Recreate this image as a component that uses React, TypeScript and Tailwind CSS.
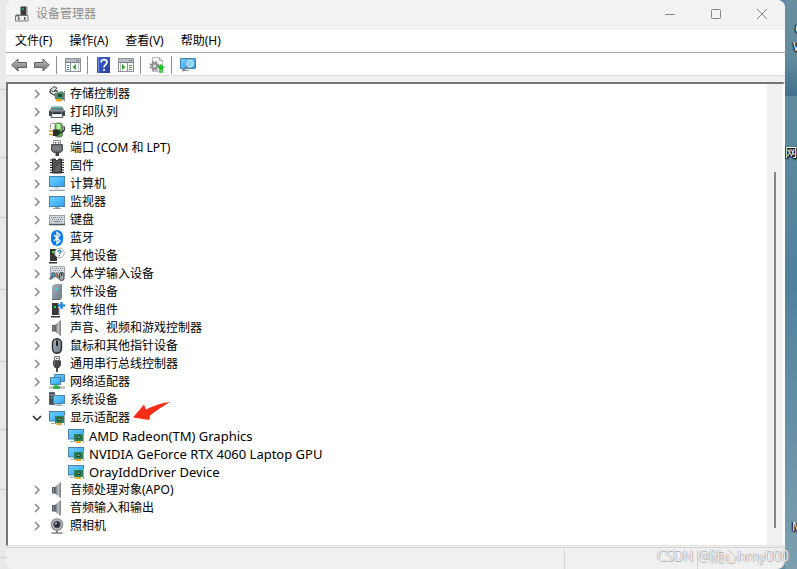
import type { ReactNode } from "react";

interface DeviceNode {
  label: string;
  icon: ReactNode;
  children?: DeviceNode[];
  marked?: boolean;
}

function Icon({ children, className = "" }: { children: ReactNode; className?: string }) {
  return (
    <svg viewBox="0 0 16 16" className={`size-4 shrink-0 ${className}`} aria-hidden="true">
      {children}
    </svg>
  );
}

function Gradients() {
  return (
    <svg className="absolute size-0" aria-hidden="true">
      <defs>
        <linearGradient id="screen" x1="0" y1="0" x2="1" y2="1">
          <stop offset="0" stopColor="#6fcdfd" />
          <stop offset="0.5" stopColor="#4fbcfb" />
          <stop offset="1" stopColor="#2a9df0" />
        </linearGradient>
        <linearGradient id="metal" x1="0" y1="0" x2="1" y2="0">
          <stop offset="0" stopColor="#5b6064" />
          <stop offset="0.6" stopColor="#c3c6c8" />
          <stop offset="1" stopColor="#777c80" />
        </linearGradient>
        <linearGradient id="steel" x1="0" y1="0" x2="1" y2="1">
          <stop offset="0" stopColor="#a9b4bc" />
          <stop offset="1" stopColor="#6c7982" />
        </linearGradient>
        <linearGradient id="arrow" x1="0" y1="0" x2="0" y2="1">
          <stop offset="0" stopColor="#c4c4c4" />
          <stop offset="1" stopColor="#6f6f6f" />
        </linearGradient>
        <linearGradient id="help" x1="0" y1="0" x2="1" y2="1">
          <stop offset="0" stopColor="#3c62d2" />
          <stop offset="1" stopColor="#2a3f9e" />
        </linearGradient>
      </defs>
    </svg>
  );
}

const storage = (
  <Icon>
    <path d="M1 4 5 .5l3 1.5L4.5 6z" fill="#ddd" stroke="#444" />
    <path d="M1 4.5v2L5 9l3-2M5 5h4" fill="none" stroke="#444" strokeWidth="1.3" />
    <path d="M5.5 8 13 5.5 14.5 7v6.500H7z" fill="#4b9272" stroke="#5b7a6c" />
    <rect x="9" y="8" width="4" height="3" fill="#1f4b38" />
    <path d="M7 13h6v2.5H7z" fill="#f2a51b" />
    <path d="M15.500 5v10" stroke="#888" />
  </Icon>
);

const printer = (
  <Icon>
    <path d="M3 2.500h10l2.500 4H.5z" fill="#71808b" />
    <path d="M4 3h8l1 1H3z" fill="#35c6a0" />
    <path d="M0 6.500h16V12H0z" fill="#39424a" />
    <path d="M1 6.500h14v1H1z" fill="#98a4ad" />
    <path d="M3.500 8.500h9l1.500 5H2z" fill="#f4f6f7" stroke="#5b646b" />
    <path d="M4 8.500h8V10H4z" fill="#20262b" />
  </Icon>
);

const battery = (
  <Icon>
    <path d="M2 7C0 2 3 1 6 1.500" fill="none" stroke="#888" />
    <rect x="6" y="1" width="7.500" height="14" rx="2.500" fill="#46b339" stroke="#777" />
    <path d="M7.500 2h4v5h-4z" fill="#b9efa3" />
    <path d="M4 7.500h4l3 1.500v3l-3 2H4z" fill="#2c2c2c" />
    <path d="M0 9h4M0 12.500h4" stroke="#d59b18" strokeWidth="1.400" />
    <path d="M11 10.500c5 0 5-5 3.500-6" fill="none" stroke="#333" strokeWidth="1.500" />
  </Icon>
);

const port = (
  <Icon>
    <path d="M4.500.500h7v4h-7z" fill="#eee" stroke="#999" />
    <path d="M6 2h1.200v1.500H6zM9 2h1.200v1.500H9z" fill="#555" />
    <path d="M2.500 4.500h11v6l-2 2h-7l-2-2z" fill="#66696c" stroke="#505356" />
    <path d="M4 7h8M4 9h8" stroke="#919598" />
    <path d="M6.500 12h3.500v4H6.500z" fill="#3e4042" />
  </Icon>
);

const chip = (
  <Icon>
    <path
      d="M1 2h3M1 4.500h3M1 7h3M1 9.500h3M1 12h3M1 14.500h3M12 2h3M12 4.500h3M12 7h3M12 9.500h3M12 12h3M12 14.500h3"
      stroke="#222"
      strokeWidth="1.200"
    />
    <path d="M3.500 1h2.500L7.500 2.500h1L10 1h2.500v14h-9z" fill="#505050" stroke="#282828" />
    <path d="M5 13 11 5v8z" fill="#666" />
  </Icon>
);

const computer = (
  <Icon>
    <rect x="0.500" y="0.500" width="15" height="10" fill="url(#screen)" stroke="#4a83a8" />
    <path d="M6 11h4v1.500H6z" fill="#b9c9d3" />
    <path d="M2 12.500h12l1.500 1.500H.500z" fill="#dbe5eb" />
    <path d="M0 14.500h16" stroke="#8fa3b1" />
  </Icon>
);

const monitor = (
  <Icon>
    <rect x="0.500" y="2.500" width="15" height="10" fill="url(#screen)" stroke="#4a83a8" />
    <path d="M6 13h4v1H6z" fill="#9ab0bf" />
    <path d="M4 14.500h8" stroke="#8fa3b1" />
  </Icon>
);

const keyboard = (
  <Icon>
    <rect x="0.500" y="3.500" width="15" height="9" fill="#d5dade" stroke="#9aa1a7" />
    <path d="M2 5.500h12M2 9.500h2M12 9.500h2" stroke="#707980" strokeDasharray="1 1" />
    <path d="M3 7.500h11" stroke="#707980" strokeDasharray="1 1" />
    <path d="M5 9.500h6" stroke="#707980" />
    <path d="M0 12.500h16" stroke="#4c555b" strokeWidth="1.500" />
  </Icon>
);

const bluetooth = (
  <Icon>
    <rect x="2" y="0" width="12" height="16" rx="6" fill="#0a7cf0" />
    <path d="M5 5l6 6-3 2.500v-11L11 5l-6 6" fill="none" stroke="#fff" strokeWidth="1.300" />
  </Icon>
);

const unknown = (
  <Icon>
    <path d="M1 1h7v12H1z" fill="#353535" />
    <path d="M3 3h2v2H3z" fill="#39e639" />
    <path d="M0 14h8v1.500H0z" fill="#333" />
    <circle cx="10.500" cy="5" r="4.700" fill="#fff" stroke="#a8b2b9" />
    <path d="M9 4c0-2 3-2 3-.3 0 1-1.500 1.100-1.500 2.300M10.500 7v1.200" fill="none" stroke="#1681cc" strokeWidth="1.300" />
  </Icon>
);

const inputDevice = (
  <Icon>
    <path d="M1.500.500h14v8h-14z" fill="#dce0e3" stroke="#a0a8ae" />
    <path d="M3 2.500h11M3 6.500h11" stroke="#7f888f" strokeDasharray="1 1" />
    <path d="M4 4.500h10" stroke="#7f888f" strokeDasharray="1 1" />
    <path d="M2 8.500C2 6 5 5.500 6 7.500c1 0 2-1 3 0 1 2 1 6 .500 6S8 11 6.500 11 3 14 1 14c-1 0-.500-3 1-5.500z" fill="#69737a" />
    <circle cx="4" cy="9" r="1.300" fill="#23a6eb" />
    <circle cx="7.500" cy="9.500" r="1" fill="#e1712c" />
    <rect x="10.500" y="6.500" width="4.500" height="8" rx="2" fill="#9da7ae" stroke="#3c454b" />
    <path d="M12.700 7v3" stroke="#222" />
  </Icon>
);

const softDevice = (
  <Icon>
    <path d="m3 2 3-2h7v14l-2 2H3z" fill="url(#steel)" />
    <path d="M11 2h2M11 2v14" stroke="#77858e" strokeWidth="0.700" />
    <path d="M6.500 4h2v2h-2z" fill="#39d7f5" />
    <path d="M3 15h8v1H3z" fill="#59656e" />
  </Icon>
);

const component = (
  <Icon>
    <path d="M3 1h7v12H3z" fill="#373737" />
    <path d="M10 2v11" stroke="#888" />
    <path d="M5 4h2v2H5z" fill="#20e820" />
    <path d="M2 14h9v1.500H2z" fill="#333" />
    <path d="M12.500 0v7M9 3.500h7" stroke="#fff" strokeWidth="4" />
    <path d="M12.500 0v7M9 3.500h7" stroke="#2f8bda" strokeWidth="2.500" />
  </Icon>
);

const speaker = (
  <Icon>
    <path d="M3 5h3v6.500H3z" fill="#555c62" />
    <path d="M6 5 11.500 0v16L6 11.500z" fill="url(#metal)" />
    <path d="M11.500.500v15" stroke="#83898d" />
    <path d="M4.500 6v4.500" stroke="#8a9095" />
  </Icon>
);

const mouse = (
  <Icon>
    <rect x="3.500" y="0.700" width="9" height="14.600" rx="4.500" fill="url(#steel)" stroke="#292d31" strokeWidth="1.400" />
    <path d="M8 1v7" stroke="#30363a" />
    <rect x="7" y="3" width="2" height="5" rx="1" fill="#15191c" />
  </Icon>
);

const usb = (
  <Icon>
    <path d="M5.500.500h5v4h-5z" fill="#eee" stroke="#777" />
    <path d="M7 2h.800v1H7zM8.500 2h.800v1h-.800z" fill="#333" />
    <path d="M4 4.500h8V9l-2 3H6L4 9z" fill="#454545" />
    <path d="M5.500 5v4" stroke="#777" />
    <path d="M8 12v4" stroke="#4a4a4a" strokeWidth="2" />
  </Icon>
);

const network = (
  <Icon>
    <path d="M5.500.500h10v7h-10z" fill="url(#screen)" stroke="#4a83a8" />
    <path d="M1.500 3.500h10v7h-10z" fill="url(#screen)" stroke="#4a83a8" />
    <path d="M0 13.500h16" stroke="#b5b5b5" strokeWidth="2" />
    <path d="M7 10.500V13M4 13.500h7" stroke="#2fb54b" strokeWidth="3" />
  </Icon>
);

const system = (
  <Icon>
    <path d="M.500.500h5v12h-5z" fill="#454b50" stroke="#5e666b" />
    <path d="M1 3h4" stroke="#aeb5b9" />
    <path d="M2 5h1.500v1.500H2z" fill="#26d65c" />
    <rect x="4.500" y="3.500" width="11" height="8" fill="url(#screen)" stroke="#4a83a8" />
    <path d="M8 12h4v1H8zM6 13h8v1H6z" fill="#a9b6be" />
  </Icon>
);

const display = (
  <Icon>
    <rect x="0.500" y="1.500" width="15" height="9.500" fill="url(#screen)" stroke="#4a83a8" />
    <path d="M2 13.500h5" stroke="#9badb9" />
    <path d="M6 6h9v7H6z" fill="#2e8159" />
    <path d="M8.500 7.500h4v3.500h-4z" fill="#15432f" />
    <path d="M9.500 8.500h2v1.500h-2z" fill="#8bc3a2" />
    <path d="M7.500 13H13v2H7.500z" fill="#eea824" />
    <path d="M15.500 5v10" stroke="#a4abaf" />
  </Icon>
);

const camera = (
  <Icon>
    <circle cx="8" cy="6.500" r="5.600" fill="#c8cbcd" stroke="#84888b" strokeWidth="1.400" />
    <circle cx="8" cy="6.500" r="3.700" fill="#42474b" />
    <circle cx="8" cy="6.500" r="2" fill="#151d27" />
    <circle cx="7" cy="5.500" r="1.200" fill="#91a6c2" />
    <path d="M7 12.500h2v2H7z" fill="#777" />
    <path d="M2.500 15h11" stroke="#777" strokeWidth="1.400" />
  </Icon>
);

const devices: DeviceNode[] = [
  { label: "存储控制器", icon: storage },
  { label: "打印队列", icon: printer },
  { label: "电池", icon: battery },
  { label: "端口 (COM 和 LPT)", icon: port },
  { label: "固件", icon: chip },
  { label: "计算机", icon: computer },
  { label: "监视器", icon: monitor },
  { label: "键盘", icon: keyboard },
  { label: "蓝牙", icon: bluetooth },
  { label: "其他设备", icon: unknown },
  { label: "人体学输入设备", icon: inputDevice },
  { label: "软件设备", icon: softDevice },
  { label: "软件组件", icon: component },
  { label: "声音、视频和游戏控制器", icon: speaker },
  { label: "鼠标和其他指针设备", icon: mouse },
  { label: "通用串行总线控制器", icon: usb },
  { label: "网络适配器", icon: network },
  { label: "系统设备", icon: system },
  {
    label: "显示适配器",
    icon: display,
    marked: true,
    children: [
      { label: "AMD Radeon(TM) Graphics", icon: display },
      { label: "NVIDIA GeForce RTX 4060 Laptop GPU", icon: display },
      { label: "OrayIddDriver Device", icon: display },
    ],
  },
  { label: "音频处理对象(APO)", icon: speaker },
  { label: "音频输入和输出", icon: speaker },
  { label: "照相机", icon: camera },
];

function TreeItem({ node }: { node: DeviceNode }) {
  const open = Boolean(node.children);
  return (
    <li>
      <div className="flex h-[18px] items-center">
        <button
          type="button"
          aria-label={node.label}
          aria-expanded={open}
          className="mr-1 flex size-4 shrink-0 items-center justify-center"
        >
          <svg viewBox="0 0 10 10" className="size-2.5" fill="none" aria-hidden="true">
            {open ? (
              <path d="m1 3 4 4 4-4" stroke="#262626" strokeWidth="1.5" />
            ) : (
              <path d="m3 1 4 4-4 4" stroke="#888" strokeWidth="1.5" />
            )}
          </svg>
        </button>
        {node.icon}
        <span className="relative ml-1 pl-px whitespace-nowrap">
          {node.label}
          {node.marked && (
            <svg viewBox="0 0 38 20" className="absolute -top-2 left-full ml-0.5 h-5 w-[38px]" aria-hidden="true">
              <path d="M1 16.500 12 3.500 14 8.500C21 5 29 2 38 1 31 5 24 10 18 14.500L17.500 19z" fill="#fb2c18" />
            </svg>
          )}
        </span>
      </div>
      {node.children && (
        <ul className="text-[13px]">
          {node.children.map((child) => (
            <li key={child.label} className="flex h-[18px] items-center pl-[39px]">
              {child.icon}
              <span className="ml-1 pl-px whitespace-nowrap">{child.label}</span>
            </li>
          ))}
        </ul>
      )}
    </li>
  );
}

function TitleBar() {
  return (
    <header className="flex h-[30px] shrink-0 items-center bg-[#f3f3f3] pb-0.5 pl-2 text-[#8c8c8c]">
      <Icon>
        <path d="M6.500.500h5.500v9H6.500z" fill="#3c3c3c" />
        <path d="M12 .500h1.500v9H12z" fill="#999" />
        <path d="M8 2h2v2H8z" fill="#20a64c" />
        <path d="M1.500 9.500h12.500v5.500H1.500z" fill="#ececec" stroke="#777" />
        <path d="M2 8.500h3.500v2H2z" fill="#666" />
        <path d="M4 11.500h1.500v2H4zM10 11.500h1.500v2H10z" fill="#222" />
      </Icon>
      <h1 className="ml-1.5">设备管理器</h1>
      <div className="ml-auto flex h-full">
        <button type="button" aria-label="最小化" className="flex w-[46px] items-center justify-center">
          <svg viewBox="0 0 12 12" className="size-3" stroke="#858585">
            <path d="M1 6.500h10" />
          </svg>
        </button>
        <button type="button" aria-label="最大化" className="flex w-[46px] items-center justify-center">
          <svg viewBox="0 0 12 12" className="size-3" stroke="#858585" fill="none">
            <rect x="1.500" y="1.500" width="9" height="9" rx="1" />
          </svg>
        </button>
        <button type="button" aria-label="关闭" className="flex w-[46px] items-center justify-center">
          <svg viewBox="0 0 12 12" className="size-3" stroke="#858585">
            <path d="m1 1 10 10M11 1 1 11" />
          </svg>
        </button>
      </div>
    </header>
  );
}

function ToolButton({ label, children }: { label: string; children: ReactNode }) {
  return (
    <button type="button" aria-label={label} className="flex w-[23px] shrink-0 justify-center">
      <Icon>{children}</Icon>
    </button>
  );
}

function Separator() {
  return <span className="mx-[3px] h-[18px] w-px shrink-0 bg-[#8d8d8d]" />;
}

const panel = (
  <>
    <rect x="0.500" y="1.500" width="15" height="13" fill="#fafafa" stroke="#8c9298" />
    <path d="M1 3.500h14" stroke="#b6bcc2" strokeWidth="3" />
    <path d="M11 3.500h4" stroke="#59636d" strokeDasharray="1 1" />
    <path d="M1 5.500h14" stroke="#777f87" />
  </>
);

function ToolBar() {
  return (
    <div role="toolbar" className="flex h-[23px] shrink-0 items-center border-b border-[#dcdcdc] bg-white pt-0.5 pl-px">
      <ToolButton label="后退">
        <path d="M.700 8 7 2v3.500h8.500v5H7V14z" fill="url(#arrow)" stroke="#626262" />
      </ToolButton>
      <ToolButton label="前进">
        <path d="M15.300 8 9 2v3.500H.500v5H9V14z" fill="url(#arrow)" stroke="#626262" />
      </ToolButton>
      <Separator />
      <span className="w-px" />
      <ToolButton label="显示/隐藏控制台树">
        {panel}
        <path d="M5.500 6v8" stroke="#8c9298" />
        <path d="M2 8.500h2M2 10.500h2M2 12.500h2" stroke="#4b7aa9" />
        <path d="M11 7v6L7.500 10z" fill="#35a52d" />
        <path d="M13.500 6v8" stroke="#b7bcc0" />
      </ToolButton>
      <Separator />
      <ToolButton label="帮助">
        <path d="M2 0h13v16H2z" fill="url(#help)" />
        <path d="M3.500 0v16" stroke="#7189da" />
        <path d="M6 5.500C6 1.500 12 2 12 5.200c0 2.300-3 2.500-3 5.300M9 12v2" fill="none" stroke="#fff" strokeWidth="1.600" />
      </ToolButton>
      <ToolButton label="显示/隐藏操作窗格">
        {panel}
        <path d="M9.500 6v8" stroke="#8c9298" />
        <path d="M11 8.500h3M11 10.500h3M11 12.500h3" stroke="#3fa13b" />
        <path d="M4 7v6L7.500 10z" fill="#35a52d" />
        <path d="M2.500 6v8" stroke="#b7bcc0" />
      </ToolButton>
      <Separator />
      <span className="w-px" />
      <ToolButton label="更新驱动程序">
        <path d="M3.500.500h7l3 3v11h-10z" fill="#f6f6f6" stroke="#bcbcbc" />
        <path d="M10.500.500v3h3" fill="none" stroke="#aaa" />
        <circle cx="5.500" cy="9" r="4" fill="none" stroke="#8a8a8a" strokeWidth="2" strokeDasharray="2 1.200" />
        <circle cx="5.500" cy="9" r="2.500" fill="#ddd" stroke="#888" strokeWidth="1.500" />
        <path d="m12 7 4 4h-2v2.500h-4V11H8z" fill="#1cc31c" />
        <path d="M10 15h4" stroke="#1cc31c" strokeWidth="1.500" />
      </ToolButton>
      <Separator />
      <span className="w-px" />
      <ToolButton label="扫描检测硬件改动">
        <path d="M.500 1.500h15v10H.500z" fill="url(#screen)" stroke="#4385ac" />
        <path d="M4 13.500h5" stroke="#8aa0ae" />
        <circle cx="10" cy="6.500" r="3.700" fill="#8dd6fa" stroke="#d9f0fb" />
        <circle cx="10" cy="6.500" r="4.400" fill="none" stroke="#5792b3" strokeWidth="0.700" />
        <path d="m7 9.500-4.500 4.500" stroke="#6f8796" strokeWidth="2" />
      </ToolButton>
    </div>
  );
}

const menus = ["文件(F)", "操作(A)", "查看(V)", "帮助(H)"];

function BackWindow() {
  return (
    <div className="flex w-1.5 shrink-0 flex-col divide-y divide-[#cfcfcf] bg-[#e9e9e9]">
      <span className="h-[90px]" />
      <span className="h-[68px]" />
      <span className="h-[60px]" />
      <span className="h-[72px]" />
      <span className="h-[72px]" />
      <span className="h-[68px]" />
      <span className="h-[60px]" />
      <span className="h-[68px]" />
      <span className="flex-1" />
    </div>
  );
}

const desktopLabel =
  "absolute whitespace-nowrap text-white [text-shadow:1px_1px_1px_#000,-1px_0_1px_#000,0_1px_2px_#000]";

export default function App() {
  return (
    <div className="relative flex h-screen overflow-hidden bg-linear-to-r from-[#e9e9e9] from-50% to-[#5d8ba3] to-50% font-['Noto_Sans','Noto_Sans_CJK_SC',sans-serif] text-xs leading-[18px] text-black">
      <Gradients />
      <BackWindow />
      <main className="flex min-w-0 flex-1 flex-col overflow-hidden rounded-lg bg-[#f0f0f0]">
        <TitleBar />
        <nav className="flex h-[23px] shrink-0 items-center gap-[17px] border-b border-[#a8a8a8] bg-white pl-[9px]">
          {menus.map((menu) => (
            <button key={menu} type="button">
              {menu}
            </button>
          ))}
        </nav>
        <ToolBar />
        <section className="mt-1.5 flex min-h-0 flex-1 border-t-2 border-r-2 border-b border-l-2 border-t-[#767676] border-r-white border-b-[#e3e3e3] border-l-[#767676] bg-white">
          <ul className="min-w-0 flex-1 overflow-hidden pt-px pl-[21px]">
            {devices.map((node) => (
              <TreeItem key={node.label} node={node} />
            ))}
          </ul>
          <div className="flex w-4 shrink-0 justify-center bg-[#f0f0f0] pt-[88px] pb-[17px]">
            <span className="w-0.5 bg-[#868686]" />
          </div>
        </section>
        <footer className="mt-px flex h-[22px] shrink-0 border-t border-[#d4d4d4] pt-0.5">
          <span className="flex-1 border-r border-[#d4d4d4]" />
          <span className="w-[133px] border-r border-[#d4d4d4]" />
          <span className="w-[85px] border-r border-[#d4d4d4]" />
          <span className="w-0.5" />
        </footer>
      </main>
      <aside className="relative w-3 shrink-0 overflow-hidden bg-linear-to-b from-[#688f9f] via-[#4f819d] to-[#7d9fb0]">
        <span className="absolute top-14 h-10 w-full bg-linear-to-b from-transparent to-[#45708c]" />
        <span className={`${desktopLabel} top-5 left-2.5`}>C</span>
        <span className={`${desktopLabel} top-[38px] left-2`}>W</span>
        <span className={`${desktopLabel} top-36 left-0`}>网</span>
        <span className={`${desktopLabel} top-[518px] left-[7px]`}>M</span>
      </aside>
      <p className="absolute right-2 bottom-[3px] text-sm leading-5 font-light whitespace-nowrap text-[#f0f0f0] [text-shadow:1px_1px_0_#aaa,-1px_0_0_#bbb]">
        CSDN @随心hmy000
      </p>
    </div>
  );
}
